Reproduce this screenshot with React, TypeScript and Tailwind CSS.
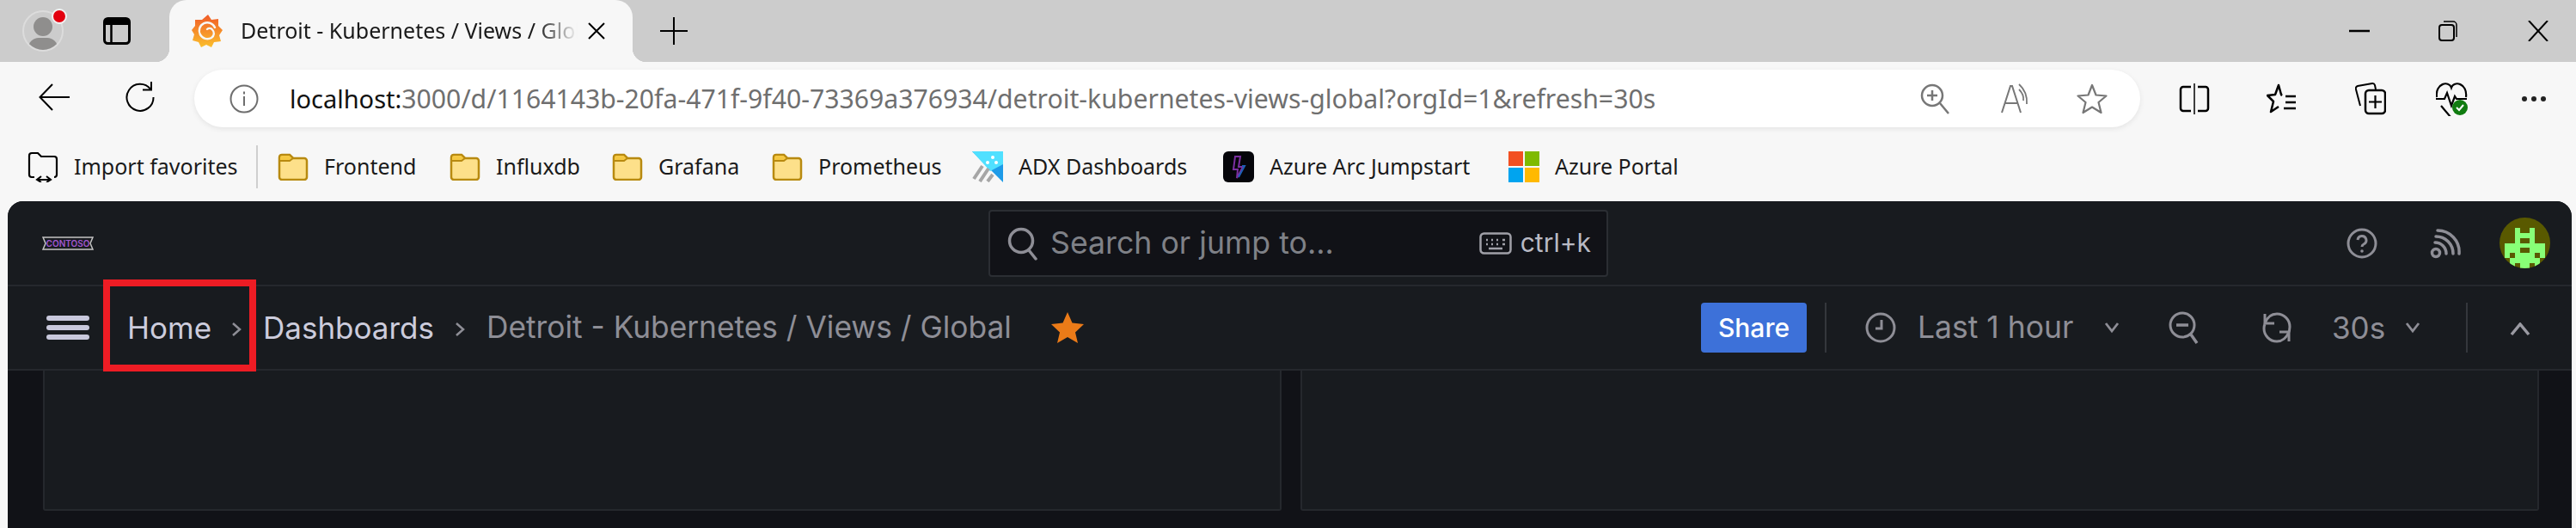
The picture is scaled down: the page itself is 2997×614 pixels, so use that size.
import React from 'react';

const chrome = "font-['Noto_Sans',sans-serif]";

const Folder = () => (
  <svg width="36" height="32" viewBox="0 0 36 32" className="shrink-0">
    <path d="M2 5a3 3 0 0 1 3-3h9l4 4h13a3 3 0 0 1 3 3v19a3 3 0 0 1-3 3H5a3 3 0 0 1-3-3z" fill="#fde08a" stroke="#b88a10" strokeWidth="2.5" />
    <path d="M2 5a3 3 0 0 1 3-3h9l4 4-4 3H2z" fill="#f5c842" stroke="#b88a10" strokeWidth="2" />
  </svg>
);

const Bookmark = ({ w, icon, label }: { w: string; icon: React.ReactNode; label: string }) => (
  <div className={`flex items-center gap-[18px] shrink-0 ${w}`}>
    {icon}
    <span className="text-[25px] text-[#1a1a1a] whitespace-nowrap">{label}</span>
  </div>
);

const GrafanaLogo = () => (
  <svg width="36" height="38" viewBox="0 0 36 38" className="shrink-0">
    <defs>
      <linearGradient id="gf" x1="0" y1="1" x2="0" y2="0">
        <stop offset="0" stopColor="#fbc02d" />
        <stop offset="1" stopColor="#f05a28" />
      </linearGradient>
    </defs>
    <path d="M19 0l4 6 8-1 0 8 5 5-4 6 2 7-8 1-3 6-6-3-6 3-3-6-7-2 2-7-3-5 4-5 0-7 8 0z" fill="url(#gf)" />
    <path d="M27 15a9.500 9.500 0 1 0-4 12 6 6 0 0 0 1-9.500 4 4 0 0 0-6-.5" fill="none" stroke="#f7f7f7" strokeWidth="2.400" strokeLinecap="round" />
  </svg>
);

const ALIEN = [
  [3, 2, 1], [6, 2, 1], [3, 3, 4], [3, 4, 1], [6, 4, 1], [1, 5, 8], [1, 6, 3], [6, 6, 3],
  [1, 7, 1], [3, 7, 4], [8, 7, 1], [2, 8, 6], [2, 9, 1], [4, 9, 2], [7, 9, 1],
];

export default function App() {
  return (
    <div className={`w-[2997px] h-[614px] overflow-hidden bg-[#f7f7f7] flex flex-col ${chrome}`}>
      {/* tab strip */}
      <div className="h-[72px] shrink-0 bg-[#cccccc] flex items-center pl-[26px] pr-[32px]">
        <div className="relative w-[48px] h-[48px] rounded-full border-2 border-[#dcdcdc] overflow-hidden shrink-0">
          <div className="absolute left-[11px] top-[6px] w-[22px] h-[22px] rounded-full bg-[#8f8e8d]" />
          <div className="absolute left-[5px] top-[30px] w-[34px] h-[24px] rounded-full bg-[#8f8e8d]" />
        </div>
        <div className="relative w-0 h-0">
          <div className="absolute -left-[14px] -top-[26px] w-[14px] h-[14px] rounded-full bg-[#e3000f] border-2 border-[#f2f2f2] box-content" />
        </div>
        <svg width="32" height="32" viewBox="0 0 32 32" className="ml-[46px] shrink-0">
          <rect x="1.5" y="1.5" width="29" height="29" rx="4" fill="none" stroke="#000" strokeWidth="3" />
          <path d="M2 3a2 2 0 0 1 2-2h24a2 2 0 0 1 2 2v6H2z" fill="#000" />
          <path d="M9.5 8v22" stroke="#000" strokeWidth="2.5" />
        </svg>
        <div className="relative ml-[45px] self-stretch w-[539px] shrink-0 bg-[#f7f7f7] rounded-t-[20px] flex items-center pl-[26px]">
          <div className="absolute -left-[16px] bottom-0 w-[16px] h-[16px] bg-[radial-gradient(circle_at_0_0,transparent_16px,#f7f7f7_16.5px)]" />
          <div className="absolute -right-[16px] bottom-0 w-[16px] h-[16px] bg-[radial-gradient(circle_at_100%_0,transparent_16px,#f7f7f7_16.5px)]" />
          <GrafanaLogo />
          <span className="ml-[21px] w-[392px] overflow-hidden whitespace-nowrap text-[25px] text-[#1a1a1a] [mask-image:linear-gradient(to_right,#000_88%,transparent_100%)]">
            Detroit - Kubernetes / Views / Global
          </span>
          <svg width="22" height="22" viewBox="0 0 22 22" className="ml-[11px] shrink-0">
            <path d="M2 2l18 18M20 2L2 20" stroke="#000" strokeWidth="2" />
          </svg>
        </div>
        <svg width="32" height="32" viewBox="0 0 32 32" className="ml-[32px] shrink-0">
          <path d="M16 0v32M0 16h32" stroke="#000" strokeWidth="2" />
        </svg>
        <svg width="24" height="4" viewBox="0 0 24 4" className="ml-auto shrink-0">
          <path d="M0 2h24" stroke="#000" strokeWidth="2.5" />
        </svg>
        <svg width="24" height="24" viewBox="0 0 24 24" className="ml-[79px] shrink-0">
          <rect x="2" y="5" width="17" height="18" rx="3" fill="none" stroke="#000" strokeWidth="2" />
          <path d="M7 1h11a4 4 0 0 1 4 4v14" fill="none" stroke="#000" strokeWidth="1.5" />
        </svg>
        <svg width="24" height="24" viewBox="0 0 24 24" className="ml-[81px] shrink-0">
          <path d="M1 0l22 24M23 0L1 24" stroke="#000" strokeWidth="2" />
        </svg>
      </div>

      {/* address row */}
      <div className="mt-[9px] h-[67px] shrink-0 flex items-center pl-[45px]">
        <svg width="36" height="32" viewBox="0 0 36 32" className="shrink-0 -mt-[3px]">
          <path d="M36 16H2M16 1L1.500 16 16 31" fill="none" stroke="#000" strokeWidth="2" />
        </svg>
        <svg width="36" height="36" viewBox="0 0 36 36" className="ml-[64px] shrink-0 -mt-[3px]">
          <path d="M30 8.500A15.500 15.500 0 1 0 33.500 18" fill="none" stroke="#000" strokeWidth="2" />
          <path d="M31 0v9.500h-10" fill="none" stroke="#000" strokeWidth="2" />
        </svg>
        <div className="ml-[45px] w-[2264px] h-[67px] shrink-0 bg-white rounded-full shadow-[0_2px_6px_rgba(0,0,0,0.08)] flex items-center pl-[41px] pr-[38px]">
          <svg width="34" height="34" viewBox="0 0 34 34" className="shrink-0">
            <circle cx="17" cy="17" r="15.500" fill="none" stroke="#6e6e6e" strokeWidth="2" />
            <path d="M17 14v11M17 8.500v3" stroke="#6e6e6e" strokeWidth="2" />
          </svg>
          <div className="ml-[36px] text-[30.200px] whitespace-nowrap text-[#6f6f6f]">
            <span className="text-[29px] text-[#111]">localhost:</span>3000/d/1164143b-20fa-471f-9f40-73369a376934/detroit-kubernetes-views-global?orgId=1&amp;refresh=30s
          </div>
          <svg width="36" height="36" viewBox="0 0 36 36" className="ml-auto shrink-0">
            <circle cx="14" cy="14" r="12" fill="none" stroke="#777" strokeWidth="2.500" />
            <path d="M23 23l10 12M14 8v12M8 14h12" stroke="#777" strokeWidth="2.500" />
          </svg>
          <svg width="36" height="36" viewBox="0 0 36 36" className="ml-[57px] shrink-0">
            <path d="M2 34L12 3h2l10 31M6 23h15" fill="none" stroke="#777" strokeWidth="2" />
            <path d="M22 1q10 9 9 23M22 7q6 6 5 13" fill="none" stroke="#777" strokeWidth="1.800" />
          </svg>
          <svg width="36" height="36" viewBox="0 0 36 36" className="ml-[53px] shrink-0">
            <path d="M18 2l4.500 11.500 12 1-9 7.500 3 12L18 27.500 7.500 34l3-12-9-7.500 12-1z" fill="none" stroke="#777" strokeWidth="2.200" strokeLinejoin="round" />
          </svg>
        </div>
        <svg width="36" height="36" viewBox="0 0 36 36" className="ml-[45px] shrink-0">
          <path d="M14 4H5a3 3 0 0 0-3 3v22a3 3 0 0 0 3 3h9M22 4h9a3 3 0 0 1 3 3v22a3 3 0 0 1-3 3h-9" fill="none" stroke="#000" strokeWidth="2.500" />
          <path d="M18 0v36" stroke="#000" strokeWidth="1.500" />
        </svg>
        <svg width="36" height="36" viewBox="0 0 36 36" className="ml-[66px] shrink-0">
          <path d="M18 14l-1-1-3-11-4 11-9 1 7 7-3 12 9-6" fill="none" stroke="#000" strokeWidth="2.500" strokeLinejoin="round" />
          <path d="M18 13h-1M22 15h12M22 22h12M20 29h14" stroke="#000" strokeWidth="2.500" />
        </svg>
        <svg width="36" height="38" viewBox="0 0 36 38" className="ml-[67px] shrink-0">
          <path d="M6 27L1 8a3 3 0 0 1 2-4l17-3a3 3 0 0 1 3 2l1 5" fill="none" stroke="#000" strokeWidth="2" />
          <rect x="12" y="9" width="23" height="27" rx="4" fill="#f7f7f7" stroke="#000" strokeWidth="2.500" />
          <path d="M23.500 15v15M16 22.500h15" stroke="#000" strokeWidth="2.200" />
        </svg>
        <svg width="38" height="40" viewBox="0 0 38 40" className="ml-[58px] shrink-0">
          <path d="M1 18C-1 2 15-2 18 7c3-9 19-5 17 11M6 28l11 13" fill="none" stroke="#000" strokeWidth="2.200" />
          <path d="M0 20h10l3-7 5 15 4-11 2 3h12" fill="none" stroke="#000" strokeWidth="2.200" />
          <circle cx="28" cy="30" r="9" fill="#107c10" />
          <path d="M24 30l3 3 5-6" fill="none" stroke="#fff" strokeWidth="2" />
        </svg>
        <div className="ml-[62px] flex gap-[5px] shrink-0">
          <div className="w-[6px] h-[6px] rounded-full bg-[#222]" />
          <div className="w-[6px] h-[6px] rounded-full bg-[#222]" />
          <div className="w-[6px] h-[6px] rounded-full bg-[#222]" />
        </div>
      </div>

      {/* favorites bar */}
      <div className="mt-[12px] h-[72px] shrink-0 flex items-center pl-[32px] pb-[4px]">
        <Bookmark
          w="w-[266px]"
          label="Import favorites"
          icon={
            <svg width="36" height="36" viewBox="0 0 36 36" className="shrink-0">
              <path d="M8 30H5a3 3 0 0 1-3-3V5a3 3 0 0 1 3-3h7l4 4h15a3 3 0 0 1 3 3v18a3 3 0 0 1-3 3" fill="none" stroke="#000" strokeWidth="2.200" />
              <path d="M12 33h14M16 29l-5 4 5 3M22 29l5 4-5 3" fill="none" stroke="#000" strokeWidth="2" />
            </svg>
          }
        />
        <div className="w-[2px] h-[50px] bg-[#cfcfcf] shrink-0" />
        <div className="ml-[23px] flex items-center">
          <Bookmark w="w-[200px]" label="Frontend" icon={<Folder />} />
          <Bookmark w="w-[189px]" label="Influxdb" icon={<Folder />} />
          <Bookmark w="w-[186px]" label="Grafana" icon={<Folder />} />
          <Bookmark w="w-[233px]" label="Prometheus" icon={<Folder />} />
          <Bookmark
            w="w-[292px]"
            label="ADX Dashboards"
            icon={
              <svg width="36" height="36" viewBox="0 0 36 36" className="shrink-0">
                <path d="M0 0h36v36z" fill="#1e9be8" />
                <path d="M0 0h36v15L21 23z" fill="#50e0ff" />
                <circle cx="24" cy="7" r="2" fill="#fff" />
                <circle cx="18" cy="13" r="2" fill="#fff" />
                <circle cx="28" cy="13" r="2" fill="#fff" />
                <path d="M2 32l10-15M9 35l10-15M18 35l6-8" stroke="#a6a6a6" strokeWidth="4" />
              </svg>
            }
          />
          <Bookmark
            w="w-[332px]"
            label="Azure Arc Jumpstart"
            icon={
              <svg width="36" height="36" viewBox="0 0 36 36" className="shrink-0">
                <rect width="36" height="36" rx="6" fill="#05050a" />
                <path d="M14 6h6l-2 12h5l-7 13 1-10h-5z" fill="none" stroke="#7b2fa0" strokeWidth="2" />
                <path d="M22 17h3l-7 13" fill="none" stroke="#1e5fb4" strokeWidth="2" />
              </svg>
            }
          />
          <Bookmark
            w="w-[200px]"
            label="Azure Portal"
            icon={
              <svg width="36" height="36" viewBox="0 0 36 36" className="shrink-0">
                <rect width="17" height="17" fill="#f25022" />
                <rect x="19" width="17" height="17" fill="#7fba00" />
                <rect y="19" width="17" height="17" fill="#00a4ef" />
                <rect x="19" y="19" width="17" height="17" fill="#ffb900" />
              </svg>
            }
          />
        </div>
      </div>

      {/* grafana window */}
      <div className="relative mt-[2px] ml-[9px] w-[2983px] flex-1 min-h-0 rounded-t-[18px] overflow-hidden bg-[#111217] flex flex-col [font-family:Inter,sans-serif]">
        <div className="h-[99px] shrink-0 bg-[#181b1f] border-b-2 border-[#25282d] flex items-center pl-[40px] pr-[25px]">
          <div className="relative w-[60px] h-[16px] shrink-0 flex items-center justify-center">
            <svg width="60" height="16" viewBox="0 0 60 16" className="absolute inset-0">
              <path d="M1 1h58l-3 7 3 7H1l3-7z" fill="none" stroke="#c4c4c4" strokeWidth="1.500" />
            </svg>
            <span className="relative text-[10px] leading-none font-semibold text-[#a057d0]">CONTOSO</span>
          </div>
          <div className="ml-[1041px] w-[721px] h-[78px] shrink-0 bg-[#111217] border-2 border-[#2b2e33] rounded-[4px] flex items-center pl-[20px] pr-[18px]">
            <svg width="36" height="40" viewBox="0 0 36 40" className="shrink-0">
              <circle cx="16" cy="17" r="13.500" fill="none" stroke="#8e8e96" strokeWidth="3.500" />
              <path d="M25 28l8 10" stroke="#8e8e96" strokeWidth="3.500" strokeLinecap="round" />
            </svg>
            <span className="ml-[14px] text-[35.700px] text-[#7f8187] whitespace-nowrap">Search or jump to...</span>
            <svg width="38" height="26" viewBox="0 0 38 26" className="ml-auto shrink-0">
              <rect x="1.500" y="1.500" width="35" height="23" rx="4" fill="none" stroke="#a0a0a8" strokeWidth="2.500" />
              <path d="M8 9h2M14 9h2M20 9h2M27 9h3M8 14h2M14 14h2M20 14h2M27 14h3M11 19h16" stroke="#a0a0a8" strokeWidth="2.500" />
            </svg>
            <span className="ml-[10px] text-[30px] text-[#b9bac4] whitespace-nowrap">ctrl+k</span>
          </div>
          <svg width="36" height="36" viewBox="0 0 36 36" className="ml-auto shrink-0">
            <circle cx="18" cy="18" r="16" fill="none" stroke="#8e8e96" strokeWidth="3" />
            <path d="M13 14a5 5 0 1 1 7 5q-2 1-2 3" fill="none" stroke="#8e8e96" strokeWidth="3" />
            <circle cx="18" cy="27" r="1.800" fill="#8e8e96" />
          </svg>
          <svg width="36" height="36" viewBox="0 0 36 36" className="ml-[61px] shrink-0">
            <circle cx="7" cy="29" r="4.500" fill="none" stroke="#8e8e96" strokeWidth="3.500" />
            <path d="M6 17a13 13 0 0 1 13 13M7 10a20 20 0 0 1 20 20M9 3a25 25 0 0 1 25 27" fill="none" stroke="#8e8e96" strokeWidth="3.500" strokeLinecap="round" />
          </svg>
          <svg width="59" height="59" viewBox="0 0 10 10" shapeRendering="crispEdges" className="ml-[45px] shrink-0 rounded-full bg-[#595900]">
            {ALIEN.map(([x, y, w]) => (
              <rect key={`${x}-${y}`} x={x} y={y} width={w} height="1" fill="#88ff77" />
            ))}
          </svg>
        </div>

        <div className="h-[98px] shrink-0 bg-[#181b1f] border-b-2 border-[#25282d] flex items-center pl-[45px] pr-[48px]">
          <div className="w-[50px] h-[28px] shrink-0 flex flex-col justify-between">
            <div className="h-[6px] rounded-full bg-[#c8c8dc]" />
            <div className="h-[6px] rounded-full bg-[#c8c8dc]" />
            <div className="h-[6px] rounded-full bg-[#c8c8dc]" />
          </div>
          <span className="ml-[44px] w-[97px] text-[35px] text-[#ccccdc] whitespace-nowrap">Home</span>
          <svg width="12" height="18" viewBox="0 0 12 18" className="ml-[24px] mt-[3px] shrink-0">
            <path d="M2 2l8 7-8 7" fill="none" stroke="#8e8e96" strokeWidth="2.500" />
          </svg>
          <span className="ml-[25px] w-[199px] text-[35px] text-[#ccccdc] whitespace-nowrap">Dashboards</span>
          <svg width="12" height="18" viewBox="0 0 12 18" className="ml-[24px] mt-[3px] shrink-0">
            <path d="M2 2l8 7-8 7" fill="none" stroke="#8e8e96" strokeWidth="2.500" />
          </svg>
          <span className="ml-[25px] w-[611px] text-[35.300px] text-[#8e8e96] whitespace-nowrap">Detroit - Kubernetes / Views / Global</span>
          <svg width="38" height="36" viewBox="0 0 38 36" className="ml-[46px] shrink-0">
            <path d="M19 0l5.500 12.500L38 14l-10 9.500L31 36 19 29 7 36l3-12.500L0 14l13.500-1.500z" fill="#eb7b18" />
          </svg>
          <button className="ml-auto w-[123px] h-[58px] shrink-0 rounded-[4px] bg-[#3d71d9] text-[30px] font-medium text-white">Share</button>
          <div className="ml-[21px] w-[2px] h-[58px] bg-[#34373c] shrink-0" />
          <svg width="36" height="36" viewBox="0 0 36 36" className="ml-[45px] shrink-0">
            <circle cx="18" cy="18" r="16" fill="none" stroke="#8e8e96" strokeWidth="3" />
            <path d="M19 9v10h-7" fill="none" stroke="#8e8e96" strokeWidth="3" />
          </svg>
          <span className="ml-[25px] w-[181px] text-[35.500px] text-[#8e8e96] whitespace-nowrap">Last 1 hour</span>
          <svg width="24" height="14" viewBox="0 0 24 14" className="ml-[33px] shrink-0">
            <path d="M5 2l7 9 7-9" fill="none" stroke="#8e8e96" strokeWidth="2.800" />
          </svg>
          <svg width="36" height="38" viewBox="0 0 36 38" className="ml-[54px] shrink-0">
            <circle cx="16" cy="16" r="14" fill="none" stroke="#8e8e96" strokeWidth="3" />
            <path d="M9 16h14M26 27l7 10" stroke="#8e8e96" strokeWidth="3.500" />
          </svg>
          <svg width="36" height="38" viewBox="0 0 36 38" className="ml-[72px] shrink-0">
            <path d="M4 3v11h11M32 35V24H21" fill="none" stroke="#8e8e96" strokeWidth="3" />
            <path d="M4 14C7 6 12 3 18 3a15 15 0 0 1 15 15q0 5-2 8M32 24c-3 7-8 11-14 11A15 15 0 0 1 3 20q0-3 1-5" fill="none" stroke="#8e8e96" strokeWidth="3" />
          </svg>
          <span className="ml-[46px] w-[63px] text-[35px] text-[#8e8e96] whitespace-nowrap">30s</span>
          <svg width="24" height="14" viewBox="0 0 24 14" className="ml-[19px] shrink-0">
            <path d="M5 2l7 9 7-9" fill="none" stroke="#8e8e96" strokeWidth="2.800" />
          </svg>
          <div className="ml-[50px] w-[2px] h-[58px] bg-[#34373c] shrink-0" />
          <svg width="24" height="16" viewBox="0 0 24 16" className="ml-[49px] mt-[4px] shrink-0">
            <path d="M2 14L12 2l10 12" fill="none" stroke="#9a9aa2" strokeWidth="3.500" />
          </svg>
        </div>

        <div className="flex gap-[22px] pl-[41px]">
          <div className="w-[1441px] h-[163px] bg-[#181b1f] border-2 border-t-0 border-[#25282d] rounded-b-[3px]" />
          <div className="w-[1441px] h-[163px] bg-[#181b1f] border-2 border-t-0 border-[#25282d] rounded-b-[3px]" />
        </div>

        {/* red annotation around Home */}
        <div className="absolute left-[111px] top-[91px] w-[178px] h-[107px] border-8 border-[#ed1c24]" />
      </div>
    </div>
  );
}
